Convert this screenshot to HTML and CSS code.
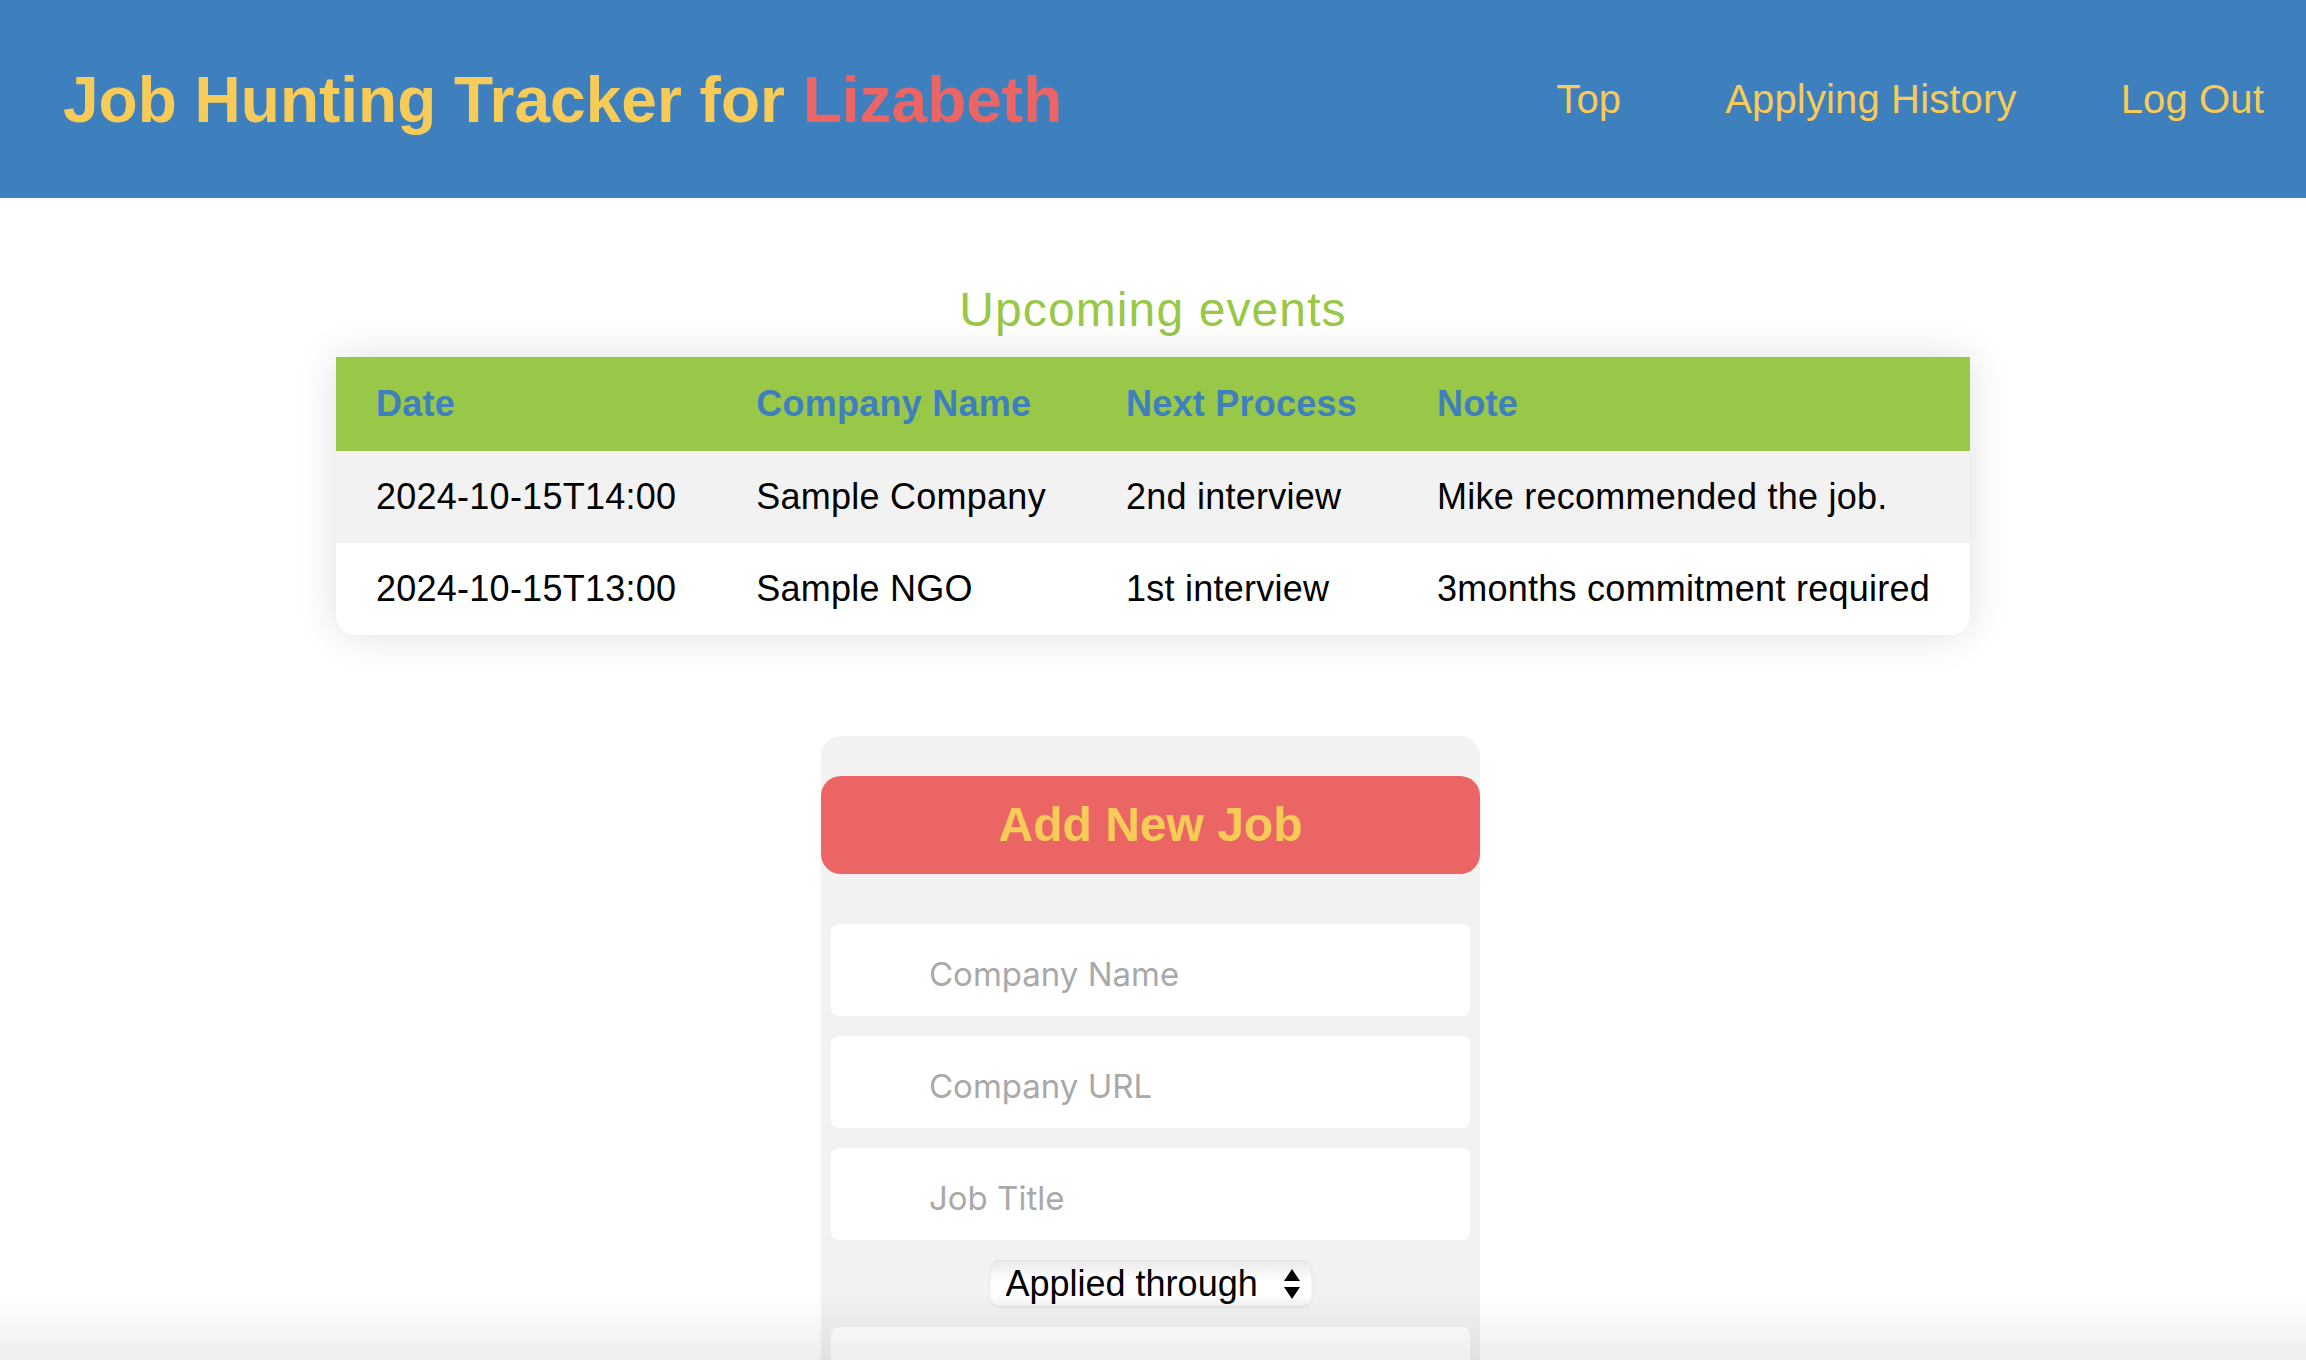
FILE: index.html
```html
<!DOCTYPE html>
<html lang="en">
<head>
<meta charset="utf-8">
<title>Job Hunting Tracker</title>
<link rel="stylesheet" href="styles.css">
</head>
<body>
<header class="site-header">
  <h1 class="brand">Job Hunting Tracker for <span class="brand-name">Lizabeth</span></h1>
  <nav class="nav">
    <a class="nav-link" href="#">Top</a>
    <a class="nav-link" href="#">Applying History</a>
    <a class="nav-link" href="#">Log Out</a>
  </nav>
</header>

<main class="main">
  <section class="events">
    <h2 class="events-title">Upcoming events</h2>
    <table class="events-table">
      <thead>
        <tr>
          <th>Date</th>
          <th>Company Name</th>
          <th>Next Process</th>
          <th>Note</th>
        </tr>
      </thead>
      <tbody>
        <tr class="row-alt">
          <td>2024-10-15T14:00</td>
          <td>Sample Company</td>
          <td>2nd interview</td>
          <td>Mike recommended the job.</td>
        </tr>
        <tr>
          <td>2024-10-15T13:00</td>
          <td>Sample NGO</td>
          <td>1st interview</td>
          <td>3months commitment required</td>
        </tr>
      </tbody>
    </table>
  </section>

  <form class="job-form">
    <h2 class="form-title">Add New Job</h2>
    <div class="fields">
      <input class="field" type="text" placeholder="Company Name">
      <input class="field" type="text" placeholder="Company URL">
      <input class="field" type="text" placeholder="Job Title">
      <span class="select-wrap">
        <select class="select">
          <option>Applied through</option>
          <option>Website</option>
          <option>Referral</option>
        </select>
        <svg class="select-arrows" width="18" height="32" viewBox="0 0 18 32"><path d="M9 1 L17 13 L1 13 Z" fill="#000"/><path d="M1 19 L17 19 L9 31 Z" fill="#000"/></svg>
      </span>
      <input class="field" type="text" placeholder="Position">
      <input class="field" type="text" placeholder="Status">
    </div>
  </form>
</main>

<div class="bottom-fade"></div>
</body>
</html>
```

FILE: styles.css
```css
* {
  box-sizing: border-box;
}

html, body {
  margin: 0;
  padding: 0;
  background: #ffffff;
  font-family: "Liberation Sans", Arial, Helvetica, sans-serif;
}

.site-header {
  height: 198px;
  background: #3e7fbe;
  display: flex;
  align-items: center;
  justify-content: space-between;
  padding: 0 42px 0 63px;
}

.brand {
  margin: 0;
  font-size: 64px;
  font-weight: 700;
  color: #f7cb57;
  line-height: 1;
  padding-top: 2px;
}

.brand-name {
  color: #eb6565;
}

.nav {
  display: flex;
  gap: 104px;
}

.nav-link {
  color: #f7cb57;
  font-size: 40px;
  letter-spacing: 0.15px;
  text-decoration: none;
  line-height: 1;
}

.main {
  display: flex;
  flex-direction: column;
  align-items: center;
}

.events {
  display: flex;
  flex-direction: column;
  align-items: center;
  margin-top: 84px;
}

.events-title {
  margin: 0 0 20px 0;
  font-size: 48px;
  font-weight: 400;
  letter-spacing: 1.1px;
  color: #99c748;
}

.events-table {
  border-collapse: collapse;
  border-radius: 0 0 20px 20px;
  overflow: hidden;
  box-shadow: 0 0 40px rgba(0, 0, 0, 0.13);
  background: #ffffff;
  font-size: 36px;
  letter-spacing: 0.25px;
  color: #000;
}

.events-table thead tr {
  background: #99c748;
}

.events-table th {
  text-align: left;
  color: #3e7fbe;
  font-weight: 700;
  padding: 26px 40px;
  white-space: nowrap;
}

.events-table td {
  padding: 25px 40px;
  white-space: nowrap;
}

.row-alt {
  background: #f2f2f2;
}

.job-form {
  width: 659px;
  margin-top: 101px;
  margin-right: 5px;
  background: #f2f2f2;
  border-radius: 20px;
  padding: 40px 0 40px 0;
  margin-bottom: 60px;
}

.form-title {
  margin: 0;
  background: #eb6565;
  color: #f7cb57;
  border-radius: 20px;
  text-align: center;
  font-size: 48px;
  font-weight: 700;
  padding: 21px 0 22px 0;
}

.fields {
  display: flex;
  flex-direction: column;
  align-items: center;
  gap: 20px;
  padding: 50px 10px 0 10px;
}

.field {
  width: 100%;
  height: 92px;
  border: none;
  border-radius: 8px;
  background: #ffffff;
  padding: 8px 0 0 98px;
  font-family: Inter, "Liberation Sans", sans-serif;
  font-size: 33px;
  color: #000;
  outline: none;
}

.field::placeholder {
  color: #a9a9a9;
}

.select-wrap {
  position: relative;
  display: inline-block;
  width: 322px;
  height: 47px;
}

.select {
  appearance: none;
  -webkit-appearance: none;
  width: 100%;
  height: 100%;
  border: none;
  border-radius: 10px;
  background: linear-gradient(#e9e9e9, #ffffff 45%, #ffffff 75%, #f1f1f1);
  box-shadow: inset 0 0 0 1px rgba(0, 0, 0, 0.04), 0 1px 2px rgba(0, 0, 0, 0.08);
  padding: 0 0 0 16px;
  font-family: "Liberation Sans", Arial, sans-serif;
  font-size: 36px;
  color: #000;
  outline: none;
}

.select-arrows {
  position: absolute;
  right: 11px;
  top: 8px;
  pointer-events: none;
}

.bottom-fade {
  position: fixed;
  left: 0;
  right: 0;
  bottom: 0;
  height: 66px;
  background: linear-gradient(rgba(0, 0, 0, 0), rgba(0, 0, 0, 0.065));
  pointer-events: none;
}
```
